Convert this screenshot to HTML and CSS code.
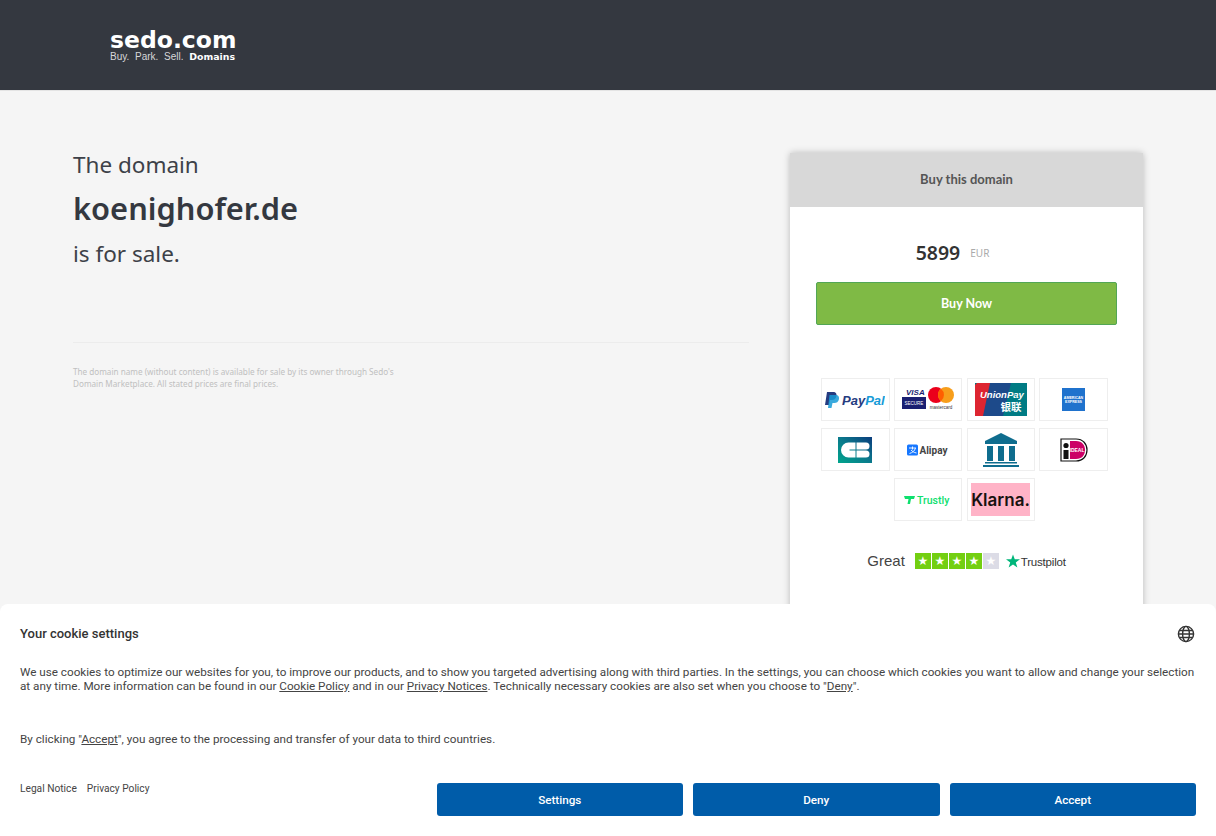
FILE: index.html
```html
<!DOCTYPE html>
<html lang="en">
<head>
  <meta charset="UTF-8" />
  <meta name="viewport" content="width=device-width, initial-scale=1.0" />
  <title>koenighofer.de is for sale</title>
  <link rel="stylesheet" href="styles.css">
</head>
<body>

  <header class="top-bar">
    <div class="logo">
      <div class="logo-name">sedo.com</div>
      <div class="logo-tag"><span>Buy.</span><span>Park.</span><span>Sell.</span><strong>Domains</strong></div>
    </div>
  </header>

  <main class="content">
    <section class="intro">
      <p class="intro-line">The domain</p>
      <h1 class="domain-name">koenighofer.de</h1>
      <p class="intro-line">is for sale.</p>
      <hr class="divider" />
      <p class="fine-print">The domain name (without content) is available for sale by its owner through Sedo's<br />Domain Marketplace. All stated prices are final prices.</p>
    </section>

    <aside class="buy-card">
      <div class="buy-head">Buy this domain</div>
      <div class="buy-body">
        <div class="price"><span class="price-value">5899</span><span class="price-currency">EUR</span></div>
        <button class="buy-btn">Buy Now</button>

        <div class="pay-grid">
          <div class="pay-tile">
            <svg width="60" height="20" viewBox="0 0 60 20">
              <path d="M2 2h6c3 0 4 2 3.400 4.500C10.800 9 9 10 7 10H5l-1 5H0z" fill="#253b80"/>
              <path d="M4.500 5h6c3 0 4 2 3.400 4.500-.6 2.500-2.400 3.500-4.400 3.500h-2l-1 5H3z" fill="#179bd7" opacity=".85"/>
              <text x="17" y="15" class="pp-text"><tspan fill="#253b80">Pay</tspan><tspan fill="#179bd7">Pal</tspan></text>
            </svg>
          </div>
          <div class="pay-tile">
            <svg width="52" height="30" viewBox="0 0 52 30">
              <text x="4" y="10" class="visa-text">VISA</text>
              <rect x="0" y="12" width="24" height="12" fill="#1a1f71"/>
              <text x="12" y="20" class="secure-text">SECURE</text>
              <circle cx="34" cy="10" r="8" fill="#eb001b"/>
              <circle cx="44" cy="10" r="8" fill="#f79e1b"/>
              <path d="M39 3.800a8 8 0 0 1 0 12.400 8 8 0 0 1 0-12.400z" fill="#ff5f00"/>
              <text x="39" y="24" class="mc-text">mastercard</text>
            </svg>
          </div>
          <div class="pay-tile">
            <svg width="52" height="33" viewBox="0 0 52 33">
              <rect width="52" height="33" fill="#007b84"/>
              <path d="M10 0h26l-8 33H2z" fill="#1d4a8a"/>
              <path d="M2 0h13L8 33H0V2z" fill="#dd2531"/>
              <text x="5" y="15" class="up-text">UnionPay</text>
              <text x="36" y="28" class="up-cn">银联</text>
            </svg>
          </div>
          <div class="pay-tile">
            <svg width="23" height="23" viewBox="0 0 23 23">
              <rect width="23" height="23" fill="#1f72cd"/>
              <text x="11.500" y="11" class="amex-text">AMERICAN</text>
              <text x="11.500" y="15" class="amex-text">EXPRESS</text>
            </svg>
          </div>

          <div class="pay-tile">
            <svg width="34" height="26" viewBox="0 0 34 26">
              <defs>
                <linearGradient id="cbFill" x1="0" y1="1" x2="1" y2="0">
                  <stop offset="0" stop-color="#00a58c"/>
                  <stop offset=".5" stop-color="#0a7a8c"/>
                  <stop offset="1" stop-color="#0b3c7d"/>
                </linearGradient>
              </defs>
              <rect width="34" height="26" fill="url(#cbFill)"/>
              <path d="M17.500 5.500h-7a7.500 7.500 0 0 0 0 15h7v-7h-6v-1h6z" fill="#fff"/>
              <path d="M18.500 5.500H28a3.500 3.500 0 0 1 0 7h-9.500zM18.500 13.500H28a3.500 3.500 0 0 1 0 7h-9.500z" fill="#fff"/>
            </svg>
          </div>
          <div class="pay-tile">
            <svg width="42" height="12" viewBox="0 0 42 12">
              <rect width="11" height="11" y=".5" rx="1.500" fill="#1677ff"/>
              <path d="M2 4h7M5.500 2.500v3M8.500 4c-.8 3-3 4.500-6 5.500M4 6c1.500 1.500 3 2.500 5.500 3" stroke="#fff" stroke-width=".9" fill="none"/>
              <text x="12.500" y="10" class="alipay-text">Alipay</text>
            </svg>
          </div>
          <div class="pay-tile">
            <svg width="36" height="34" viewBox="0 0 36 34" fill="#0f6d8e">
              <path d="M18 0l16 8v3H2V8z"/>
              <rect x="4" y="13" width="6" height="15"/>
              <rect x="15" y="13" width="6" height="15"/>
              <rect x="26" y="13" width="6" height="15"/>
              <rect x="2" y="29" width="32" height="1.500"/>
              <rect x="0" y="32" width="36" height="2"/>
            </svg>
          </div>
          <div class="pay-tile">
            <svg width="28" height="24" viewBox="0 0 28 24">
              <path d="M1 1h15c7 0 11 5 11 11s-4 11-11 11H1z" fill="#fff" stroke="#111" stroke-width="1.200"/>
              <path d="M10 3h6c6 0 9 4 9 9s-3 9-9 9h-6z" fill="#cc0066"/>
              <rect x="3.500" y="12" width="5" height="9" fill="#111"/>
              <circle cx="6" cy="7.500" r="2.600" fill="#111"/>
              <text x="17" y="14" class="ideal-text">IDEAL</text>
            </svg>
          </div>

          <div class="pay-tile">
            <svg width="48" height="12" viewBox="0 0 48 12">
              <path d="M0 2h11l-1 3H7l-1 5H3.500l1-5H1z" fill="#0ee06e"/>
              <text x="13" y="10" class="trustly-text">Trustly</text>
            </svg>
          </div>
          <div class="pay-tile">
            <svg width="59" height="33" viewBox="0 0 59 33">
              <rect width="59" height="33" fill="#ffb3c7"/>
              <text x="29.500" y="23" class="klarna-text">Klarna.</text>
            </svg>
          </div>
        </div>

        <div class="rating">
          <span class="rating-word">Great</span>
          <div class="stars">
            <span class="star-box"></span><span class="star-box"></span><span class="star-box"></span><span class="star-box"></span><span class="star-box star-off"></span>
          </div>
          <div class="tp-mark">
            <svg width="14" height="14" viewBox="0 0 24 24"><path d="M12 1l3 8.200h9l-7.200 5.300 2.700 8.500L12 17.800 4.500 23l2.700-8.500L0 9.200h9z" fill="#00b67a"/></svg>
            <span class="tp-name">Trustpilot</span>
          </div>
        </div>
      </div>
    </aside>
  </main>

  <div class="cookie-banner">
    <div class="cookie-head">
      <h2 class="cookie-title">Your cookie settings</h2>
      <svg class="globe" width="18" height="18" viewBox="0 0 18 18" fill="none" stroke="#333" stroke-width="1.400">
        <circle cx="9" cy="9" r="7.600"/>
        <ellipse cx="9" cy="9" rx="3.400" ry="7.600"/>
        <path d="M1.400 9h15.200M2.400 5.500h13.200M2.400 12.500h13.200"/>
      </svg>
    </div>
    <p class="cookie-text">We use cookies to optimize our websites for you, to improve our products, and to show you targeted advertising along with third parties. In the settings, you can choose which cookies you want to allow and change your selection at any time. More information can be found in our <a href="#">Cookie Policy</a> and in our <a href="#">Privacy Notices</a>. Technically necessary cookies are also set when you choose to "<a href="#">Deny</a>".</p>
    <p class="cookie-text cookie-consent">By clicking "<a href="#">Accept</a>", you agree to the processing and transfer of your data to third countries.</p>
    <div class="cookie-foot">
      <div class="legal-links">
        <a href="#">Legal Notice</a>
        <a href="#">Privacy Policy</a>
      </div>
      <div class="cookie-actions">
        <button class="cookie-btn">Settings</button>
        <button class="cookie-btn">Deny</button>
        <button class="cookie-btn">Accept</button>
      </div>
    </div>
  </div>

</body>
</html>
```

FILE: styles.css
```css
body {
  margin: 0;
  height: 836px;
  overflow: hidden;
  background-color: #f5f5f5;
  font-family: "Noto Sans", "Open Sans", sans-serif;
  color: #333;
}

.top-bar {
  height: 91px;
  box-sizing: border-box;
  padding: 29px 0 0 110px;
  background-color: #343840;
  border-bottom: 1px solid #e4e4e4;
}

.logo {
  width: 125px;
  color: #fff;
}

.logo-name {
  font-family: "DejaVu Sans", sans-serif;
  font-weight: bold;
  font-size: 23.500px;
  line-height: 23px;
}

.logo-tag {
  display: flex;
  justify-content: space-between;
  font-family: "Liberation Sans", sans-serif;
  font-size: 10px;
  line-height: 9px;
  color: #d6d7d9;
}

.logo-tag strong {
  font-family: "DejaVu Sans", sans-serif;
  font-size: 9.400px;
  color: #fff;
}

.content {
  display: flex;
  padding: 62px 0 0 73px;
}

.intro {
  width: 676px;
}

.intro-line {
  margin: 0;
  font-size: 22.500px;
  line-height: 24px;
  color: #3d4148;
}

.domain-name {
  margin: 10px 0 13px;
  font-size: 30.800px;
  line-height: 42px;
  font-weight: 600;
  color: #343840;
}

.divider {
  height: 1px;
  margin: 76px 0 0;
  border: 0;
  background-color: #ececec;
}

.fine-print {
  margin: 23px 0 0;
  font-size: 8.170px;
  line-height: 12px;
  color: #c0c0c0;
}

.buy-card {
  width: 353px;
  height: 500px;
  margin-left: 41px;
  background-color: #fff;
  border-radius: 2px;
  box-shadow: 0 0 7px rgba(0, 0, 0, 0.25);
}

.buy-head {
  height: 54px;
  line-height: 53px;
  text-align: center;
  background-color: #d8d8d8;
  font-family: Lato, sans-serif;
  font-size: 13px;
  font-weight: bold;
  color: #555;
}

.buy-body {
  padding: 33px 26px 0;
}

.price {
  display: flex;
  align-items: center;
  justify-content: center;
  gap: 10px;
  height: 25px;
  padding-right: 28px;
}

.price-value {
  font-size: 19.500px;
  font-weight: 600;
  color: #333;
}

.price-currency {
  font-size: 10px;
  color: #aaa;
}

.buy-btn {
  display: block;
  width: 100%;
  height: 43px;
  margin-top: 17px;
  background-color: #7fba45;
  border: 1px solid #52a655;
  border-radius: 2px;
  color: white;
  font-family: Lato, sans-serif;
  font-size: 12.500px;
  font-weight: bold;
}

.pay-grid {
  display: flex;
  flex-wrap: wrap;
  justify-content: center;
  gap: 7px 4.200px;
  margin: 53px 4px 0 0;
}

.pay-tile {
  display: flex;
  align-items: center;
  justify-content: center;
  width: 68.500px;
  height: 43px;
  box-sizing: border-box;
  background-color: #fff;
  border: 1px solid #eee;
}

.pp-text {
  font-family: "Liberation Sans", sans-serif;
  font-size: 13px;
  font-weight: bold;
  font-style: italic;
}

.visa-text {
  font-family: "Liberation Sans", sans-serif;
  font-size: 8px;
  font-weight: bold;
  font-style: italic;
  fill: #1a1f71;
}

.secure-text {
  font-family: "Liberation Sans", sans-serif;
  font-size: 4.500px;
  fill: #fff;
  text-anchor: middle;
}

.mc-text {
  font-family: "Liberation Sans", sans-serif;
  font-size: 4.500px;
  fill: #333;
  text-anchor: middle;
}

.up-text {
  font-family: "Liberation Sans", sans-serif;
  font-size: 9.500px;
  font-weight: bold;
  font-style: italic;
  fill: #fff;
}

.up-cn {
  font-family: "Noto Sans CJK SC", sans-serif;
  font-size: 10.500px;
  font-weight: bold;
  fill: #fff;
  text-anchor: middle;
}

.amex-text {
  font-family: "Liberation Sans", sans-serif;
  font-size: 3.600px;
  font-weight: bold;
  fill: #fff;
  text-anchor: middle;
}

.alipay-text {
  font-family: Roboto, sans-serif;
  font-size: 10px;
  font-weight: bold;
  fill: #444;
}

.ideal-text {
  font-family: "Liberation Sans", sans-serif;
  font-size: 5px;
  font-weight: bold;
  fill: #fff;
  text-anchor: middle;
}

.trustly-text {
  font-family: Roboto, sans-serif;
  font-size: 10.500px;
  font-weight: 500;
  fill: #0ee06e;
}

.klarna-text {
  font-family: Inter, sans-serif;
  font-size: 17px;
  font-weight: 600;
  fill: #17120f;
  text-anchor: middle;
}

.rating {
  display: flex;
  align-items: center;
  justify-content: center;
  margin-top: 31px;
}

.rating-word {
  font-family: "Liberation Sans", sans-serif;
  font-size: 15px;
  color: #444;
}

.stars {
  display: flex;
  gap: 1px;
  margin-left: 10px;
}

.star-box {
  position: relative;
  width: 16px;
  height: 16px;
  background-color: #73cf11;
}

.star-box::before {
  content: "★";
  position: absolute;
  inset: 0;
  text-align: center;
  font-family: "DejaVu Sans", sans-serif;
  font-size: 12px;
  line-height: 16px;
  color: #fff;
}

.star-off {
  background-color: #dcdce6;
}

.tp-mark {
  display: flex;
  align-items: center;
  gap: 1px;
  margin-left: 7px;
}

.tp-name {
  padding-top: 2px;
  font-family: "Liberation Sans", sans-serif;
  font-size: 11.500px;
  letter-spacing: -0.2px;
  color: #333;
}

.cookie-banner {
  position: fixed;
  left: 0;
  right: 0;
  bottom: 0;
  height: 232px;
  box-sizing: border-box;
  padding: 21px 20px 0;
  background-color: #fff;
  border-radius: 8px 8px 0 0;
  font-family: Roboto, sans-serif;
  color: #444;
}

.cookie-head {
  display: flex;
  align-items: center;
  justify-content: space-between;
  padding-right: 1px;
}

.cookie-title {
  margin: 0;
  font-size: 13px;
  line-height: 18px;
  font-weight: 500;
  color: #333;
}

.cookie-text {
  margin: 22px 0 0;
  font-size: 11.700px;
  line-height: 14px;
}

.cookie-text a {
  color: #444;
}

.cookie-consent {
  margin-top: 39px;
}

.cookie-foot {
  display: flex;
  justify-content: space-between;
  margin-top: 37px;
}

.legal-links {
  display: flex;
  gap: 10px;
  font-size: 10.200px;
  line-height: 12px;
}

.legal-links a {
  color: #444;
  text-decoration: none;
}

.cookie-actions {
  display: flex;
  gap: 10px;
}

.cookie-btn {
  width: 246.500px;
  height: 33px;
  background-color: #005ca9;
  border: none;
  border-radius: 3px;
  color: white;
  font-family: Roboto, sans-serif;
  font-size: 11.700px;
  font-weight: 500;
}
```
